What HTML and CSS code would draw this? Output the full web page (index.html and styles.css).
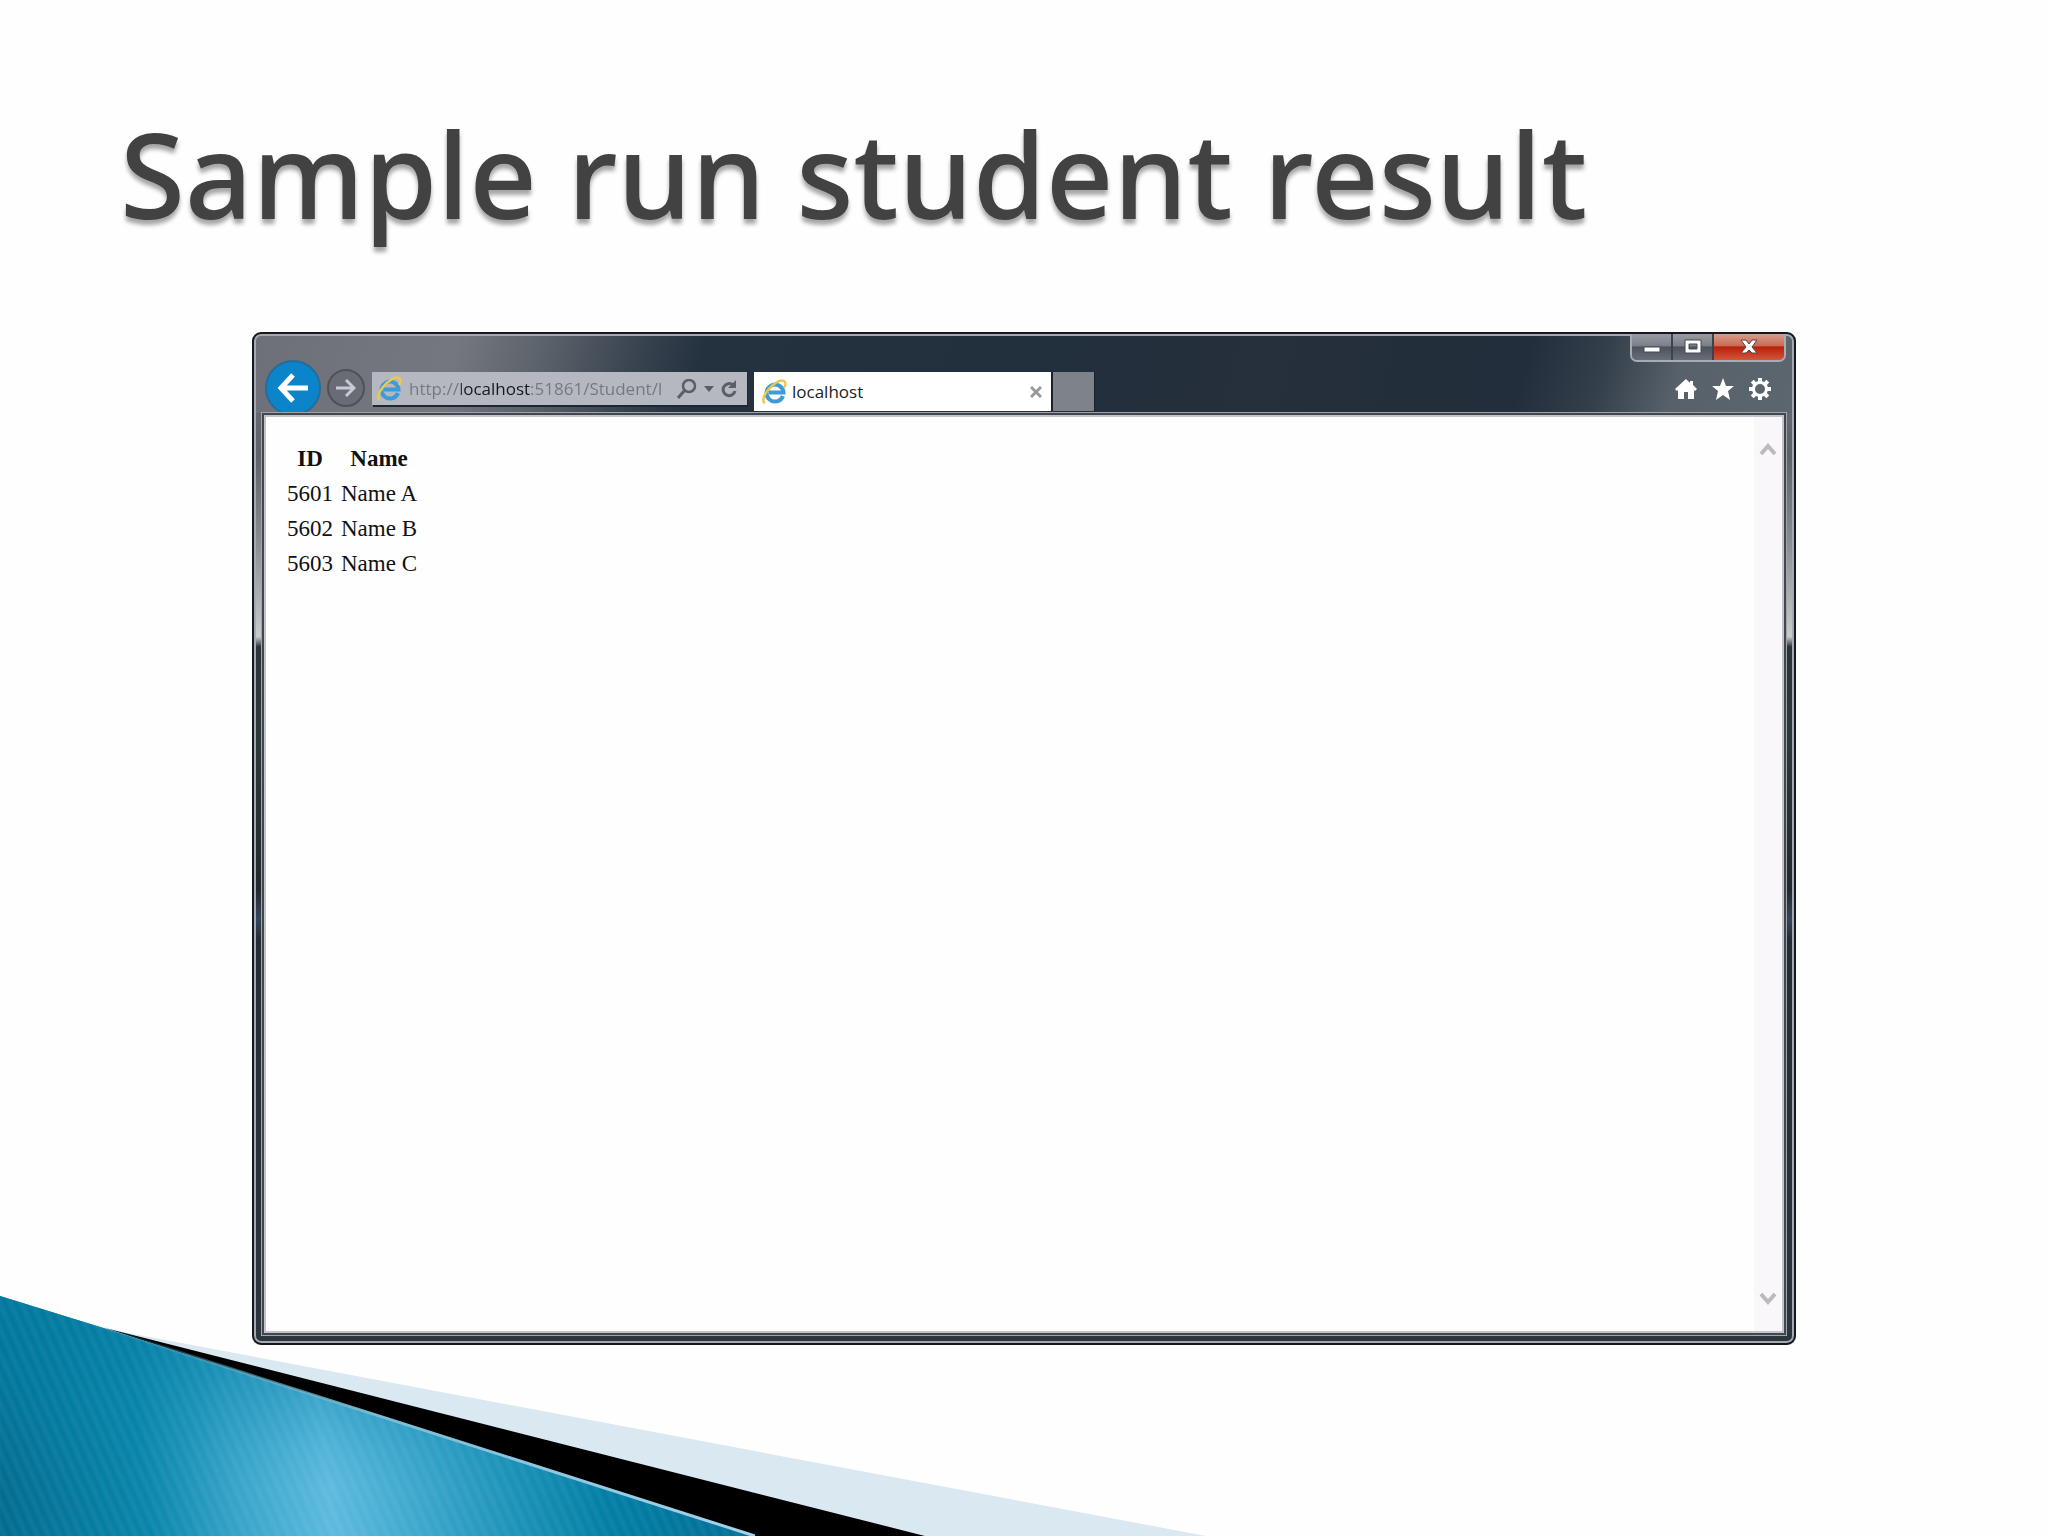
FILE: index.html
```html
<!DOCTYPE html>
<html lang="en">
<head>
    <meta charset="utf-8">
    <title>Sample run student result</title>
    <link rel="stylesheet" href="styles.css">
</head>
<body>
    <svg class="wave" viewBox="0 0 1229 244" aria-hidden="true">
        <defs>
            <linearGradient id="blue" gradientUnits="userSpaceOnUse" x1="0" y1="170" x2="700" y2="90">
                <stop offset="0" stop-color="#006c90"/>
                <stop offset="0.2" stop-color="#0784ab"/>
                <stop offset="0.33" stop-color="#36a4c9"/>
                <stop offset="0.46" stop-color="#5cbade"/>
                <stop offset="0.65" stop-color="#2a9cc2"/>
                <stop offset="0.85" stop-color="#007da5"/>
                <stop offset="1" stop-color="#007199"/>
            </linearGradient>
            <linearGradient id="shade" x1="0" y1="0" x2="0" y2="1">
                <stop offset="0" stop-color="#0079a0" stop-opacity="0.8"/>
                <stop offset="0.3" stop-color="#007ca5" stop-opacity="0.5"/>
                <stop offset="0.65" stop-color="#0083ac" stop-opacity="0.1"/>
                <stop offset="0.8" stop-color="#0083ac" stop-opacity="0"/>
            </linearGradient>
            <linearGradient id="edge" x1="0" y1="0" x2="1" y2="0">
                <stop offset="0.1" stop-color="#5fa5b8" stop-opacity="0"/>
                <stop offset="0.5" stop-color="#7bbdd2"/>
                <stop offset="1" stop-color="#a5d3ec"/>
            </linearGradient>
            <linearGradient id="stripe">
                <stop offset="0" stop-color="#fff" stop-opacity="0"/>
                <stop offset="0.5" stop-color="#fff" stop-opacity="0.06"/>
                <stop offset="1" stop-color="#fff" stop-opacity="0"/>
            </linearGradient>
            <pattern id="stripes" width="10" height="10" patternUnits="userSpaceOnUse" patternTransform="rotate(-24)">
                <rect width="10" height="10" fill="url(#stripe)"/>
            </pattern>
        </defs>
        <polygon points="112,38 1206,244 900,244" fill="#dae8f1"/>
        <polygon points="105,36 925,244 740,244" fill="#000"/>
        <polygon points="0,4 110,38 755,244 0,244" fill="url(#blue)"/>
        <polygon points="0,4 110,38 755,244 0,244" fill="url(#shade)"/>
        <polygon points="0,4 110,38 755,244 0,244" fill="url(#stripes)"/>
        <path d="M0 4L110 38L755 244" fill="none" stroke="url(#edge)" stroke-width="3"/>
    </svg>

    <main class="slide">
        <h1 class="title">Sample run student result</h1>

        <section class="window">
            <header class="toolbar">
                <div class="window-buttons">
                    <button class="win-btn" aria-label="Minimize">
                        <svg width="18" height="18" viewBox="0 0 18 18"><rect x="1" y="9" width="16" height="5" fill="#fff" stroke="#444b55"/></svg>
                    </button>
                    <button class="win-btn" aria-label="Maximize">
                        <svg width="18" height="16" viewBox="0 0 18 16"><path d="M1 1h16v13H1z M5 5v5h8V5z" fill="#fff" stroke="#444b55" fill-rule="evenodd"/></svg>
                    </button>
                    <button class="win-btn win-close" aria-label="Close">
                        <svg width="18" height="16" viewBox="0 0 18 16"><path d="M1 1h5l3 4 3-4h5l-5 7 5 6h-5l-3-3-3 3H1l5-6z" fill="#fff" stroke="#5a4546"/></svg>
                    </button>
                </div>
                <div class="nav">
                    <button class="back" aria-label="Back">
                        <svg width="32" height="30" viewBox="0 0 32 30"><path d="M31 15H4M16 2L4 15l12 13" fill="none" stroke="#fff" stroke-width="5"/></svg>
                    </button>
                    <button class="forward" aria-label="Forward">
                        <svg width="20" height="20" viewBox="0 0 20 20"><path d="M0 10h17M10 2l8 8-8 8" fill="none" stroke="#c9cbd0" stroke-width="3"/></svg>
                    </button>
                    <form class="address">
                        <svg class="ie" width="26" height="26" viewBox="0 0 26 26">
                            <path d="M22 17a8.500 8.500 0 1 1 .5-3.500H8" fill="none" stroke="#3d9bd8" stroke-width="4"/>
                            <path d="M4 24c-3-1-2-7 3-13S19 0 23 2c2 1 2 4 0 7" fill="none" stroke="#ecc94a" stroke-width="2.500"/>
                        </svg>
                        <input class="url" type="text" aria-label="Address" value="http://localhost:51861/Student/I">
                        <button class="tool" type="button" aria-label="Search">
                            <svg width="20" height="20" viewBox="0 0 20 20"><circle cx="12" cy="7" r="6" fill="none" stroke="#5a5e66" stroke-width="2.500"/><path d="M8 11l-7 8" stroke="#5a5e66" stroke-width="3"/></svg>
                        </button>
                        <button class="tool" type="button" aria-label="Show address list">
                            <svg width="10" height="6" viewBox="0 0 10 6"><path d="M0 0h10L5 6z" fill="#5a5e66"/></svg>
                        </button>
                        <button class="tool" type="button" aria-label="Refresh">
                            <svg width="16" height="18" viewBox="0 0 16 18"><path d="M12 5A6 6 0 1 0 14 11" fill="none" stroke="#5a5e66" stroke-width="3"/><path d="M15 0v8H7z" fill="#5a5e66"/></svg>
                        </button>
                    </form>
                    <div class="tab">
                        <svg class="ie" width="26" height="26" viewBox="0 0 26 26">
                            <path d="M22 17a8.500 8.500 0 1 1 .5-3.500H8" fill="none" stroke="#3d9bd8" stroke-width="4"/>
                            <path d="M4 24c-3-1-2-7 3-13S19 0 23 2c2 1 2 4 0 7" fill="none" stroke="#ecc94a" stroke-width="2.500"/>
                        </svg>
                        <span class="tab-title">localhost</span>
                        <button class="tool" aria-label="Close tab">
                            <svg width="12" height="12" viewBox="0 0 12 12"><path d="M1 1l10 10M11 1L1 11" stroke="#999" stroke-width="3"/></svg>
                        </button>
                    </div>
                    <button class="new-tab" aria-label="New tab"></button>
                    <div class="menu">
                        <button class="tool" aria-label="Home">
                            <svg width="22" height="20" viewBox="0 0 22 20"><path d="M11 0L0 10l2 2 1-1v9h6v-7h4v7h6v-9l1 1 2-2-4-4V2h-3v2z" fill="#fff"/></svg>
                        </button>
                        <button class="tool" aria-label="Favorites">
                            <svg width="22" height="22" viewBox="0 0 22 22"><path d="M11 0l3 8h8l-6 5 2 9-7-5-7 5 2-9-6-5h8z" fill="#fff"/></svg>
                        </button>
                        <button class="tool" aria-label="Tools">
                            <svg width="22" height="22" viewBox="0 0 22 22"><circle cx="11" cy="11" r="6.500" fill="none" stroke="#fff" stroke-width="3"/><path d="M11 0v4M11 18v4M0 11h4M18 11h4M3.200 3.200L6 6M16 16l2.800 2.800M3.200 18.800L6 16M16 6l2.800-2.800" stroke="#fff" stroke-width="4"/></svg>
                        </button>
                    </div>
                </div>
            </header>
            <div class="page">
                <table class="students">
                    <thead>
                        <tr><th>ID</th><th>Name</th></tr>
                    </thead>
                    <tbody>
                        <tr><td>5601</td><td>Name A</td></tr>
                        <tr><td>5602</td><td>Name B</td></tr>
                        <tr><td>5603</td><td>Name C</td></tr>
                    </tbody>
                </table>
                <div class="scrollbar">
                    <svg width="18" height="14" viewBox="0 0 18 14"><path d="M2 12l7-8 7 8" fill="none" stroke="#bcbabd" stroke-width="4"/></svg>
                    <svg width="18" height="14" viewBox="0 0 18 14"><path d="M2 2l7 8 7-8" fill="none" stroke="#bcbabd" stroke-width="4"/></svg>
                </div>
            </div>
        </section>
    </main>
</body>
</html>
```
FILE: styles.css
```css
* {
    box-sizing: border-box;
}

body {
    margin: 0;
    background: #fefefe;
    font-family: "Open Sans", "Noto Sans", sans-serif;
}

button {
    display: flex;
    align-items: center;
    justify-content: center;
    padding: 0;
    border: none;
    background: none;
}

svg {
    display: block;
}

/* Decoration in the bottom left corner */
.wave {
    position: absolute;
    left: 0;
    bottom: 0;
    width: 60%;
}

.slide {
    position: relative;
    display: flex;
    flex-direction: column;
    min-height: 100vh;
    padding: 94px 252px 191px;
}

.title {
    margin: 0 -136px 78px;
    padding-left: 4px;
    font-family: "Noto Sans", sans-serif;
    font-size: 118px;
    font-weight: 500;
    line-height: 160px;
    color: #424242;
    text-shadow: 0 5px 4px rgba(0, 0, 0, 0.35);
}

/* Browser window */
.window {
    flex: 1;
    display: flex;
    flex-direction: column;
    padding: 0 8px 8px;
    border: 2px solid #15181c;
    border-radius: 9px;
    background: linear-gradient(#70747b 0%, #5c6268 12%, #858a8e 20%, #c8cacc 30%, #2b3439 31%, #2c393b 40%, #23292d 55%, #33465f 58%, #252d34 60%, #2b353d 100%);
    box-shadow: inset 0 0 0 2px #a4aaaf;
}

.toolbar {
    display: flex;
    flex-direction: column;
    height: 77px;
    margin: 2px -6px 0;
    padding: 0 6px;
    border-radius: 6px 6px 0 0;
    background: linear-gradient(105deg, #6d7078 0%, #73757c 8%, #74777e 13%, #5f656d 18%, #3d4753 24%, #24313f 29%, #222f3d 50%, #262f3c 65%, #222e3b 82%, #333f4b 87%, #58616a 92%, #5c666d 100%);
}

.window-buttons {
    display: flex;
    align-self: flex-end;
    height: 28px;
    margin-top: -2px;
    border: 2px solid #a7acb2;
    border-top: none;
    border-radius: 0 0 7px 7px;
    overflow: hidden;
}

.win-btn {
    width: 41px;
    border-right: 2px solid #3d434c;
    background: linear-gradient(#989ca2 0%, #7b8088 45%, #4c535d 50%, #686f78 100%);
}

.win-close {
    width: 70px;
    border-right: none;
    background: linear-gradient(#d79c8c 0%, #cb6a53 45%, #b7200a 50%, #d4563a 100%);
}

.nav {
    display: flex;
    align-items: flex-start;
    height: 51px;
    padding: 10px 15px 0 3px;
}

.back {
    width: 56px;
    height: 56px;
    margin: -12px 6px 0 0;
    border: 2px solid #246c9b;
    border-radius: 50%;
    background: #0b84ca;
}

.forward {
    width: 38px;
    height: 38px;
    margin: -3px 7px 0 0;
    border: 2px solid #4d5159;
    border-radius: 50%;
    background: #696c74;
}

.address {
    display: flex;
    align-items: center;
    gap: 7px;
    width: 375px;
    height: 33px;
    margin-right: 7px;
    padding: 0 10px 0 4px;
    background: #b5b8c0;
    box-shadow: 1px 2px 0 #1e2630;
}

/* Host name is darker than the rest of the address */
.url {
    flex: 1;
    min-width: 0;
    height: 32px;
    padding: 0;
    border: none;
    outline: none;
    font-family: inherit;
    font-size: 17px;
    color: transparent;
    background: linear-gradient(90deg, #74777f 52px, #15181d 52px, #15181d 122px, #74777f 122px);
    -webkit-background-clip: text;
    background-clip: text;
}

.tool {
    flex: none;
}

.tab {
    display: flex;
    align-items: center;
    gap: 5px;
    width: 297px;
    height: 39px;
    padding: 0 9px 0 7px;
    background: #fff;
}

.tab-title {
    flex: 1;
    font-size: 17px;
    color: #222;
}

.new-tab {
    width: 44px;
    height: 39px;
    border: 1px solid #1b222b;
    border-width: 0 1px 0 2px;
    background: #7d8389;
}

.menu {
    display: flex;
    align-items: center;
    gap: 15px;
    height: 34px;
    margin-left: auto;
}

.page {
    position: relative;
    flex: 1;
    display: flex;
    align-items: flex-start;
    justify-content: space-between;
    padding-left: 17px;
    border: 2px solid #42474e;
    outline: 1px solid #a0a5a9;
    background: #fefefe;
    box-shadow: inset 0 0 0 2px #c3c3cb;
}

.students {
    margin-top: 25px;
    border-spacing: 4px 3px;
    font-family: "Liberation Serif", serif;
    font-size: 23px;
    line-height: 28px;
    color: #111;
}

.students th,
.students td {
    padding: 2px;
}

.scrollbar {
    align-self: stretch;
    display: flex;
    flex-direction: column;
    align-items: center;
    justify-content: space-between;
    width: 28px;
    margin: 2px;
    padding: 25px 0;
    background: #f9f7fa;
}
```
